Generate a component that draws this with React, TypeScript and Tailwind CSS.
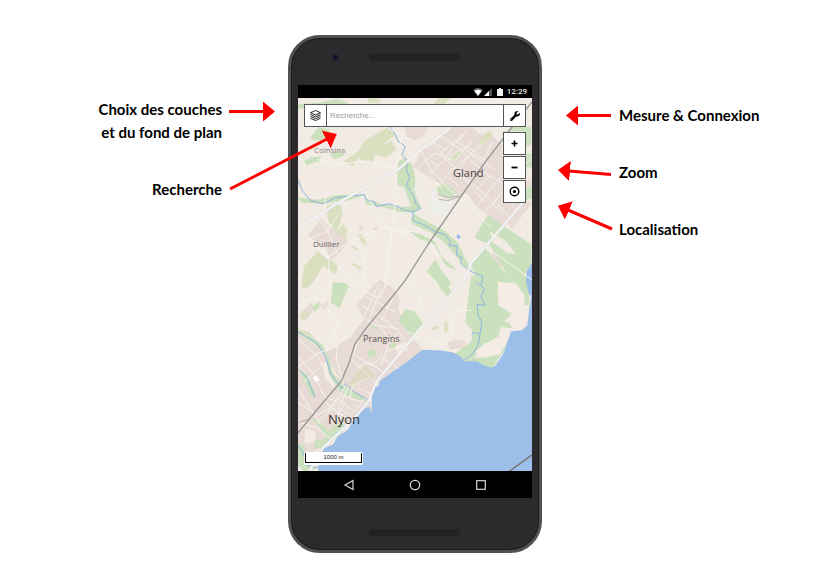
import React from "react";
import { FaWrench } from "react-icons/fa";

type Shape = { d: string; c: string };

const URBAN = "#e8dad5";
const GREEN = "#cbe0bd";
const OLIVE = "#dadfbf";
const WATER = "#9cbfea";
const STREAM = "#8db6e2";

// Land use in the northern half, in map units (three per pixel)
const northAreas: Shape[] = [
  { c: URBAN, d: "M372 148 L402 122 L425 108 L462 85 L520 88 L545 108 L580 112 L612 140 L618 310 L700 240 L700 262 L615 385 L585 362 L545 335 L505 285 L462 300 L440 262 L408 250 L345 205 L360 180 Z" },
  { c: URBAN, d: "M318 85 L392 85 L378 110 L350 128 L326 118 Z" },
  { c: URBAN, d: "M640 395 L700 320 L700 312 L615 312 L615 360 Z" },
  { c: URBAN, d: "M50 390 L70 360 L84 380 L112 396 L154 430 L120 470 L98 486 L84 450 L50 430 L28 412 Z" },
  { c: URBAN, d: "M560 480 L590 460 L625 492 L602 512 Z" },
  { c: URBAN, d: "M180 396 L190 380 L198 392 L188 402 Z M224 392 L240 386 L236 402 Z" },
  { c: GREEN, d: "M0 300 L60 306 L110 292 L170 290 L200 292 L150 308 L70 318 L10 315 Z" },
  { c: GREEN, d: "M302 190 L325 180 L345 205 L352 240 L350 285 L370 330 L348 345 L300 342 L250 326 L205 320 L200 305 L250 318 L300 328 L340 325 L318 270 L298 262 L298 210 Z" },
  { c: GREEN, d: "M348 348 L385 370 L440 398 L480 435 L500 480 L520 515 L500 508 L470 470 L440 435 L400 405 L345 380 L338 365 Z" },
  { c: GREEN, d: "M336 402 L370 410 L412 432 L430 475 L470 510 L472 518 L440 500 L410 440 L365 424 Z" },
  { c: GREEN, d: "M385 520 L412 485 L432 520 L460 555 L448 572 L420 555 Z" },
  { c: GREEN, d: "M552 378 L570 352 L612 380 L640 400 L700 440 L700 500 L678 530 L682 570 L640 550 L612 505 L575 440 L552 430 L530 418 Z" },
  { c: GREEN, d: "M520 498 L560 448 L600 500 L640 545 L665 570 L560 572 L530 530 Z" },
  { c: GREEN, d: "M0 20 L65 14 L120 2 L152 16 L90 30 L0 32 Z" },
  { c: GREEN, d: "M38 120 L60 88 L95 94 L76 128 L42 126 Z" },
  { c: GREEN, d: "M614 115 L640 86 L700 88 L700 140 L682 150 L682 100 L614 100 Z" },
  { c: GREEN, d: "M682 170 L702 166 L702 210 L682 206 Z M682 278 L702 260 L702 300 L682 310 Z" },
  { c: GREEN, d: "M416 270 L440 254 L478 285 L452 302 L420 286 Z" },
  { c: GREEN, d: "M18 190 L40 178 L70 175 L62 190 L25 202 Z M95 168 L125 158 L140 172 L110 184 Z" },
  { c: OLIVE, d: "M138 190 L180 160 L200 130 L240 105 L270 88 L292 110 L250 145 L225 170 L205 192 L180 180 L165 205 Z" },
  { c: OLIVE, d: "M205 170 L280 130 L296 156 L260 180 L232 170 L220 200 Z" },
  { c: OLIVE, d: "M85 325 L110 318 L130 325 L132 355 L115 405 L90 368 Z M115 405 L135 378 L148 398 L142 420 Z" },
  { c: OLIVE, d: "M10 560 L18 505 L60 460 L86 482 L55 540 L30 570 L12 570 Z M75 490 L95 480 L120 500 L115 530 L78 505 Z" },
  { c: OLIVE, d: "M540 130 L575 98 L585 112 L552 145 Z M452 185 L490 155 L498 168 L465 194 Z" },
  { c: OLIVE, d: "M180 412 L192 408 L206 440 L196 440 Z M160 440 L182 452 L180 460 L160 446 Z M164 494 L192 512 L190 518 L162 500 Z" },
  { c: OLIVE, d: "M420 0 L460 0 L440 18 L410 18 Z M210 0 L250 4 L240 16 L210 14 Z" },
  { c: "#f2ebe4", d: "M575 400 L625 430 L655 470 L630 466 L585 435 Z" },
  { c: "#eeeeea", d: "M392 325 L408 275 L420 312 L470 310 L455 350 L402 346 Z" },
  { c: WATER, d: "M702 495 L686 520 L684 570 L702 570 Z M474 416 l7 -7 l8 8 l-7 8 Z" },
];

const northStreams = [
  "M275 85 L292 110 L300 130 L322 145 L312 170 L328 190 L325 215 L335 240 L325 262 L345 290 L355 320 L368 332 L345 342 L345 368 L380 382 L412 402 L440 410 L458 432 L452 442 L478 445 L475 470 L492 480 L486 494 L505 512 L528 525 L555 535 L550 562",
  "M0 246 L14 280 L38 308 L75 318 L112 300 L165 294 L200 290 L202 304 L230 312 L235 326 L272 318 L300 326 L320 338 L345 340",
];

const northMinor = [
  "M160 0 L210 60 L290 100 L360 140 L395 210 L440 262 L505 320 L580 390",
  "M318 85 L292 210 L290 330 L276 440 L260 570",
  "M60 185 L120 200 L200 190 L300 215 M85 280 L80 330 L62 360",
  "M402 122 L440 180 L490 230 L560 290 L615 350",
  "M388 152 L430 115 L480 150 L520 190 L570 230 L618 260",
  "M360 210 L410 165 L470 190 L520 130 M390 232 L440 185 L490 110 M430 250 L470 210 L560 130",
  "M430 165 L470 130 L540 165 M450 185 L490 150 L570 190 M480 215 L520 170 L590 215",
  "M540 320 L580 270 L615 230 M560 345 L600 300 M580 230 L530 280 L560 312",
  "M0 390 L45 430 L90 480 L150 530 L215 570 M90 480 L98 570 M90 480 L154 430 L265 390 L340 400",
  "M205 290 L265 390 L330 408 M180 440 L202 490 L195 560 M60 360 L84 390 L120 470 M30 425 L90 400 L120 350",
  "M340 280 L398 235 L430 270",
  "M420 480 L395 430 M560 445 L625 490 L700 545",
  "M0 105 L60 90 M0 50 L70 65 M540 20 L620 8 M700 180 L590 310",
  "M625 300 L660 340 M645 280 L680 315 M600 320 L640 365 M395 185 L420 205 M455 240 L480 262 M500 245 L525 270",
  "M420 140 L445 158 M505 100 L480 130 M585 130 L560 180",
];

// Land use in the southern half
const southAreas: Shape[] = [
  { c: URBAN, d: "M175 70 L200 40 L245 -8 L285 20 L305 50 L300 85 L322 120 L330 150 L375 205 L330 238 L285 265 L245 300 L222 320 L214 382 L145 435 L60 500 L0 540 L0 160 L40 182 L80 215 L120 190 L160 165 L195 110 Z" },
  { c: URBAN, d: "M4 98 L38 62 L50 78 L22 120 Z M68 70 L85 56 L92 70 L78 84 Z M448 180 L475 174 L505 180 L500 200 L455 202 Z" },
  { c: "#f3ebe4", d: "M75 240 L100 250 L125 290 L108 318 L80 290 Z M20 440 L55 450 L50 480 L20 485 Z M288 190 L325 180 L330 205 L300 215 Z" },
  { c: GREEN, d: "M98 62 L105 0 L145 5 L152 15 L125 78 Z" },
  { c: GREEN, d: "M420 0 L440 0 L465 35 L450 45 L425 18 Z" },
  { c: GREEN, d: "M520 -20 L600 -14 L600 70 L640 95 L610 130 L600 165 L552 190 L525 235 L490 235 L470 215 L520 180 L525 150 L502 120 L510 50 Z" },
  { c: GREEN, d: "M598 -20 L680 -20 L690 0 L694 60 L685 110 L670 108 L680 40 L655 5 Z M612 118 L640 125 L650 140 L610 135 Z" },
  { c: GREEN, d: "M495 228 L560 228 L600 218 L630 175 L620 205 L580 256 L550 242 L510 240 Z" },
  { c: GREEN, d: "M300 115 L322 82 L350 88 L378 130 L345 170 L325 145 Z" },
  { c: GREEN, d: "M0 146 L35 162 L75 190 L95 230 L105 275 L125 295 L148 320 L200 345 L208 362 L150 342 L122 325 L92 275 L82 222 L55 190 L0 158 Z" },
  { c: GREEN, d: "M5 265 L30 280 L55 345 L40 345 L15 290 Z M210 205 L225 200 L235 220 L212 230 Z M220 140 L225 128 L245 142 Z M275 190 L285 180 L298 190 L280 202 Z" },
  { c: GREEN, d: "M40 408 L65 415 L90 450 L115 425 L150 430 L120 465 L75 500 L48 500 L50 475 L88 470 L60 430 Z M0 485 L20 495 L18 530 L60 560 L20 570 L0 550 Z M42 75 L65 58 L65 75 L50 90 Z" },
  { c: OLIVE, d: "M0 140 L35 152 L50 170 L15 165 Z M400 138 L420 132 L418 142 L400 144 Z M438 120 L448 116 L450 148 L440 154 Z M5 100 L22 85 L33 100 L10 118 Z" },
  { c: "#ded9c0", d: "M155 305 L178 270 L200 248 L230 282 L195 300 L158 315 Z" },
  { c: "#f4ece5", d: "M600 0 L655 5 L678 40 L680 70 L655 108 L640 95 L605 70 Z M530 212 L560 185 L610 170 L628 150 L625 185 L605 218 L560 226 Z" },
  { c: "#f4ece5", d: "M655 108 L680 70 L692 70 L688 130 L672 145 L645 142 L635 125 Z" },
  { c: WATER, d: "M702 25 L694 80 L688 130 L672 145 L640 148 L628 180 L618 212 L592 252 L578 256 L552 244 L535 238 L500 238 L485 222 L465 212 L430 206 L375 204 L362 212 L330 238 L285 268 L245 298 L242 312 L230 318 L222 335 L220 390 L214 374 L196 382 L168 412 L150 444 L118 465 L105 488 L75 500 L60 555 L62 570 L702 570 Z" },
  { c: GREEN, d: "M538 238 L560 238 L580 248 L592 235 L598 240 L580 258 L552 248 Z" },
  { c: "#e4d9d0", d: "M212 370 L221 372 L220 392 Z" },
];

const southStreams = [
  "M535 0 L560 22 L548 45 L562 70 L538 68 L540 100 L552 120 L540 190 L525 215 L498 236",
  "M522 158 l4 -8 M530 154 h12",
  "M0 150 L55 182 L82 222 L98 275 L130 320 L142 305 L168 330 L205 352",
  "M5 265 L28 290 L50 345 M0 490 L15 510 L25 550 L60 558",
];

const southMinor = [
  "M242 10 L190 120 L118 190 L60 215 L0 255 M118 190 L115 230 L140 320 L125 340",
  "M0 170 L60 225 L90 285 M0 225 L50 280 L80 345 L120 360 M20 300 L60 260 M0 320 L30 370 L70 430",
  "M0 362 L60 400 L110 370 M0 420 L60 440 L110 480 M120 350 L170 390 L200 350 M150 320 L120 380 L160 400",
  "M80 360 L130 400 M95 385 L125 340 L190 360 M60 420 L105 380 L150 410 M105 420 L140 365",
  "M160 215 L220 250 L250 225 L300 260 M185 165 L160 230 L215 285 M235 120 L275 175 L250 250",
  "M190 70 L270 120 L320 170 M205 45 L290 90 M175 90 L230 130 L300 140 M250 20 L215 110 M285 50 L250 115",
  "M85 30 L78 68 L118 115 L105 180 M0 70 L85 30 M140 0 L245 50 L270 0 M330 150 L400 185 L460 175",
  "M330 0 L370 55 L355 85 M395 25 L470 100 L455 175 M470 90 L520 85 M155 350 L165 310 L205 290 M180 320 L215 335",
  "M175 260 L210 240 L255 270 M265 185 L300 155 M265 210 L310 190",
];

const mainRoads = [
  "M0 392 L120 315 L300 215 L370 155 L455 92 L560 0",
  "M682 305 L615 385 L520 495 L500 545 L360 700 L235 852 L212 910 L170 960 L75 1050 L35 1118",
];

const railways = [
  "M702 12 L640 90 L560 195 L500 280 L390 440 L320 550 L280 600 L205 690 L170 740 L155 790 L130 850 L60 932 L0 1005",
];

const sidings = ["M424 305 L450 308 L480 298 L498 285 M420 290 L450 300 L480 295 M0 975 L30 965 L50 948"];

function Lines({ paths, color, width }: { paths: string[]; color: string; width: number }) {
  return (
    <g fill="none" stroke={color} strokeWidth={width} strokeLinejoin="round" strokeLinecap="round">
      {paths.map((d) => (
        <path key={d} d={d} />
      ))}
    </g>
  );
}

function Areas({ shapes }: { shapes: Shape[] }) {
  return (
    <>
      {shapes.map((s) => (
        <path key={s.d} d={s.d} fill={s.c} />
      ))}
    </>
  );
}

function MapDrawing() {
  return (
    <svg className="absolute inset-0 h-full w-full" viewBox="0 0 702 1120" preserveAspectRatio="xMidYMid slice" aria-hidden="true">
      <rect width="702" height="1120" fill="#f2ebe4" />
      <Areas shapes={northAreas} />
      <g transform="translate(0 552)">
        <Areas shapes={southAreas} />
        <Lines paths={southStreams} color={STREAM} width={3} />
        <Lines paths={southMinor} color="#f7f3f1" width={3} />
        <path d="M702 -48 L686 -24 L684 0 L694 40 L702 40 Z" fill={WATER} />
      </g>
      <Lines paths={northStreams} color={STREAM} width={3} />
      <Lines paths={northMinor} color="#f7f3f1" width={3} />
      <Lines paths={mainRoads} color="#dfdedf" width={8} />
      <Lines paths={mainRoads} color="#f6f6f7" width={5} />
      <Lines paths={sidings} color="#b5b1ae" width={3} />
      <Lines paths={railways} color="#999795" width={4} />
      <path d="M632 1122 L702 1071" fill="none" stroke="#77716b" strokeWidth="4" />
      <path d="M44 838 l12 -5 l8 14 l-11 5 Z" fill="#fff" />
    </svg>
  );
}

function LayersIcon() {
  return (
    <svg className="h-[11px] w-[11px]" viewBox="0 0 24 24" fill="none" stroke="#111" strokeWidth="2" strokeLinejoin="round" aria-hidden="true">
      <path d="M12 1 L23 6 L12 11 L1 6 Z" />
      <path d="M1 10 L12 15 L23 10" />
      <path d="M1 14 L12 19 L23 14" />
      <path d="M1 18 L12 23 L23 18" />
    </svg>
  );
}

function StatusBar() {
  return (
    <div className="flex h-[13px] items-center justify-end bg-black pr-[5px] text-[#e4e4e4]">
      <svg className="h-2 w-[10px]" viewBox="0 0 10 8" aria-hidden="true">
        <path d="M0 2 Q5 -2 10 2 L5 8 Z" fill="#666" />
        <path d="M1.500 3 Q5 0.500 8.500 3 L5 8 Z" fill="#fff" />
      </svg>
      <svg className="ml-px h-2 w-2" viewBox="0 0 8 8" aria-hidden="true">
        <path d="M8 0 V8 H0 Z" fill="#555" />
        <path d="M5 3 V8 H0 Z" fill="#fff" />
      </svg>
      <svg className="ml-[5px] h-2 w-[6px]" viewBox="0 0 6 8" aria-hidden="true">
        <path d="M0 1 H2 V0 H4 V1 H6 V8 H0 Z" fill="#f2f2f2" />
      </svg>
      <span className="ml-1 font-[Roboto,sans-serif] text-[8px] leading-[13px] font-medium">12:29</span>
    </div>
  );
}

const controlClass = "flex h-[23px] w-[23px] items-center justify-center border border-[#555] bg-white text-black";

function MapScreen() {
  return (
    <div className="relative flex grow flex-col overflow-hidden p-[6px]">
      <MapDrawing />
      <span className="absolute top-[46px] left-[16px] text-[8px] leading-3 text-[#888]">Coinsins</span>
      <span className="absolute top-[67px] left-[155px] text-[11px] leading-4 text-[#444]">Gland</span>
      <span className="absolute top-[140px] left-[15px] text-[8px] leading-3 text-[#666]">Duillier</span>
      <span className="absolute top-[233px] left-[65px] text-[9px] leading-4 text-[#555]">Prangins</span>
      <span className="absolute top-[311px] left-[30px] text-[13px] leading-5 text-[#333]">Nyon</span>

      <div className="relative flex h-[23px] border border-[#555] bg-white">
        <button type="button" aria-label="Couches" className="flex w-[22px] items-center justify-center border-r border-[#555]">
          <LayersIcon />
        </button>
        <input
          type="text"
          aria-label="Recherche"
          placeholder="Recherche..."
          className="min-w-0 grow px-[3px] font-['Liberation_Sans',sans-serif] text-[8px] text-black outline-none placeholder:text-[#999]"
        />
        <button type="button" aria-label="Outils" className="flex w-[22px] items-center justify-center border-l border-[#555] text-black">
          <FaWrench className="h-[10px] w-[10px]" />
        </button>
      </div>
      <div className="relative mt-[5px] flex flex-col items-end gap-px">
        <button type="button" aria-label="Zoom avant" className={controlClass}>
          <svg className="h-[7px] w-[7px]" viewBox="0 0 7 7" aria-hidden="true">
            <path d="M0.500 3.500 H6.500 M3.500 0.500 V6.500" stroke="currentColor" strokeWidth="1.600" />
          </svg>
        </button>
        <button type="button" aria-label="Zoom arrière" className={controlClass}>
          <svg className="h-[7px] w-[7px]" viewBox="0 0 7 7" aria-hidden="true">
            <path d="M0.500 3.500 H6.500" stroke="currentColor" strokeWidth="1.800" />
          </svg>
        </button>
        <button type="button" aria-label="Localisation" className={controlClass}>
          <svg className="h-[11px] w-[11px]" viewBox="0 0 11 11" aria-hidden="true">
            <circle cx="5.500" cy="5.500" r="4.300" fill="none" stroke="currentColor" strokeWidth="1.400" />
            <circle cx="5.500" cy="5.500" r="1.600" fill="currentColor" />
          </svg>
        </button>
      </div>

      <div className="relative mt-auto self-start rounded-xs bg-white px-px pt-px pb-[2px]">
        <div className="h-[10px] w-[57px] border border-t-0 border-black text-center font-['Liberation_Sans',sans-serif] text-[6px] leading-[9px] text-[#222]">1000 m</div>
      </div>
    </div>
  );
}

function NavBar() {
  return (
    <div className="flex h-[27px] items-center justify-between bg-black px-[45px] text-[#d6d6d6]">
      <button type="button" aria-label="Retour">
        <svg className="h-[12px] w-[12px]" viewBox="0 0 12 12" fill="none" stroke="currentColor" strokeWidth="1.200" aria-hidden="true">
          <path d="M10 1.500 V10.500 L2 6 Z" />
        </svg>
      </button>
      <button type="button" aria-label="Accueil">
        <svg className="h-[12px] w-[12px]" viewBox="0 0 12 12" fill="none" stroke="currentColor" strokeWidth="1.300" aria-hidden="true">
          <circle cx="6" cy="6" r="4.700" />
        </svg>
      </button>
      <button type="button" aria-label="Applications">
        <svg className="h-[12px] w-[12px]" viewBox="0 0 12 12" fill="none" stroke="currentColor" strokeWidth="1.200" aria-hidden="true">
          <rect x="1.700" y="1.700" width="8.600" height="8.600" />
        </svg>
      </button>
    </div>
  );
}

// Callout arrows, in the phone's own coordinates
function Arrows() {
  return (
    <svg className="pointer-events-none absolute top-0 left-0 h-full w-full overflow-visible" viewBox="0 0 254 518" aria-hidden="true">
      <defs>
        <marker id="head" markerUnits="userSpaceOnUse" markerWidth="12" markerHeight="20" refX="1" refY="10" orient="auto">
          <path d="M0 0 L12 10 L0 20 Z" fill="#f00" />
        </marker>
      </defs>
      <g stroke="#f00" strokeWidth="3">
        <path d="M-59 76.500 H-24" markerEnd="url(#head)" />
        <path d="M-58 154 L39 104" markerEnd="url(#head)" />
        <path d="M323 80.500 H289" markerEnd="url(#head)" />
        <path d="M323 139.500 L281 136" markerEnd="url(#head)" />
        <path d="M324 194 L280 175" markerEnd="url(#head)" />
      </g>
    </svg>
  );
}

export default function App() {
  return (
    <main className="grid grid-cols-[1fr_auto_1fr] bg-white pt-[35px] pr-0.5 pb-3 font-[Lato,sans-serif] text-[15px] leading-[23px] font-bold text-black">
      <div className="flex flex-col gap-[34px] pt-[63px] pr-[66px] text-right">
        <p>
          Choix des couches
          <br />
          et du fond de plan
        </p>
        <p>Recherche</p>
      </div>

      <div className="relative h-[518px] w-[254px]">
        <div className="flex h-full flex-col items-stretch rounded-[32px] border-[3px] border-[#505050] bg-[#2d2a2d] px-[7px] shadow-[inset_0_0_0_1px_#1c1b1c]">
          <div className="flex h-[47px] items-center pb-[8px] pl-[34px]">
            <span className="h-[7px] w-[7px] rounded-full border border-[#272231] bg-[#171026]" />
            <span className="ml-[30px] h-[7px] w-[91px] rounded-full bg-[#232123]" />
          </div>
          <div className="flex grow flex-col font-['Open_Sans',sans-serif] font-normal">
            <StatusBar />
            <MapScreen />
            <NavBar />
          </div>
          <div className="flex h-[52px] items-center pt-[16px] pl-[71px]">
            <span className="h-[7px] w-[91px] rounded-full bg-[#232123]" />
          </div>
        </div>
        <Arrows />
      </div>

      <div className="flex flex-col gap-[34px] pt-[69px] pl-[77px]">
        <p>Mesure &amp; Connexion</p>
        <p>Zoom</p>
        <p>Localisation</p>
      </div>
    </main>
  );
}
